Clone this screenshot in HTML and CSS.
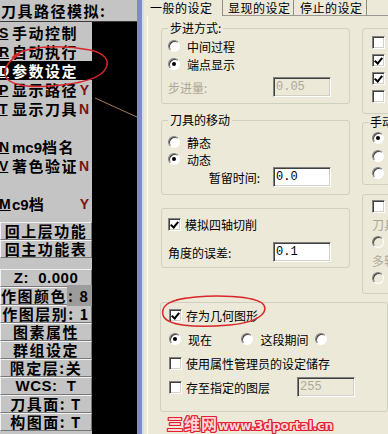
FILE: index.html
```html
<!DOCTYPE html>
<html lang="zh">
<head>
  <meta charset="UTF-8" />
  <title>刀具路径模拟 - 参数设定</title>
  <link rel="stylesheet" href="styles.css">
</head>
<body>
<div class="screen">

  <div class="side">
    <div class="side-title">刀具路径模拟:</div>
    <div class="side-main">
      <div class="menu">
        <div class="item"><span class="key">S</span><span>手动控制</span></div>
        <div class="item"><span class="key">R</span><span>自动执行</span></div>
        <div class="item active"><span class="key">D</span><span>参数设定</span></div>
        <div class="item"><span class="key">P</span><span>显示路径</span><span class="flag">Y</span></div>
        <div class="item"><span class="key">T</span><span>显示刀具</span><span class="flag">N</span></div>
        <div class="item"></div>
        <div class="item"><span class="key">N</span><span><span class="latin">mc9</span>档名</span></div>
        <div class="item"><span class="key">V</span><span>著色验证</span><span class="flag">N</span></div>
        <div class="item"></div>
        <div class="item"><span class="key m">M</span><span><span class="latin">c9</span>档</span><span class="flag">Y</span></div>

        <div class="btn-group">
          <div class="btn">回上层功能</div>
          <div class="btn">回主功能表</div>
        </div>

        <div class="btn-group lower">
          <div class="btn latin">Z:&nbsp; 0.000</div>
          <div class="btn">作图颜色<span class="value">: 8</span></div>
          <div class="btn">作图层别: 1</div>
          <div class="btn">图素属性</div>
          <div class="btn">群组设定</div>
          <div class="btn">限定层:关</div>
          <div class="btn latin">WCS:&nbsp; T</div>
          <div class="btn">刀具面: T</div>
          <div class="btn">构图面: T</div>
        </div>
      </div>
      <div class="canvas">
        <svg width="45" height="412" viewBox="0 0 45 412">
          <line x1="3" y1="76" x2="45" y2="95" stroke="#a87a5a" stroke-width="1" />
        </svg>
      </div>
    </div>
  </div>

  <div class="edge"></div>

  <div class="dialog">
    <div class="tabs">
      <div class="tab active">一般的设定</div>
      <div class="tab second">显现的设定</div>
      <div class="tab third">停止的设定</div>
      <div class="tab-fill"></div>
    </div>

    <div class="page">
      <div class="cols">
        <div class="col-left">
          <fieldset class="group step">
            <legend>步进方式:</legend>
            <div class="row"><span class="radio"></span>中间过程</div>
            <div class="row"><span class="radio on"></span>端点显示</div>
            <div class="row field-row">
              <span class="muted">步进量:</span>
              <span class="field off">0.05</span>
            </div>
          </fieldset>

          <fieldset class="group move">
            <legend>刀具的移动</legend>
            <div class="row"><span class="radio"></span>静态</div>
            <div class="row short"><span class="radio on"></span>动态</div>
            <div class="row field-row end">
              <span class="field-label">暂留时间:</span>
              <span class="field">0.0</span>
            </div>
          </fieldset>

          <fieldset class="group axis">
            <div class="row"><span class="check on"></span>模拟四轴切削</div>
            <div class="row field-row">
              <span>角度的误差:</span>
              <span class="field">0.1</span>
            </div>
          </fieldset>
        </div>

        <div class="col-right">
          <fieldset class="group opts">
            <div class="row"><span class="check"></span></div>
            <div class="row"><span class="check on"></span></div>
            <div class="row"><span class="check on"></span></div>
            <div class="row"><span class="check"></span></div>
          </fieldset>

          <fieldset class="group hand">
            <legend>手动</legend>
            <div class="row"><span class="radio on"></span></div>
            <div class="row"><span class="radio"></span></div>
            <div class="row short"><span class="radio"></span></div>
          </fieldset>

          <fieldset class="group tools">
            <div class="row"><span class="check"></span></div>
            <div class="row muted">刀具</div>
            <div class="row"><span class="radio off"></span></div>
            <div class="row muted">多轴</div>
            <div class="row"><span class="radio off"></span></div>
          </fieldset>
        </div>
      </div>

      <fieldset class="group save">
        <div class="row"><span class="check on"></span>存为几何图形</div>
        <div class="row">
          <span class="choice"><span class="radio on"></span>现在</span>
          <span class="choice wide"><span class="radio"></span>这段期间</span>
          <span class="choice"><span class="radio"></span></span>
        </div>
        <div class="row"><span class="check"></span>使用属性管理员的设定储存</div>
        <div class="row">
          <span class="choice layer"><span class="check"></span>存至指定的图层</span>
          <span class="field off">255</span>
        </div>
      </fieldset>

      <div class="mark"><span class="mark-cn">三维网</span>www.3dportal.cn</div>
    </div>
  </div>

  <svg class="notes" width="388" height="434" viewBox="0 0 388 434">
    <path d="M12 58 C22 46 60 44 90 50 C104 53 110 60 106 68 C101 79 80 84 50 86 C24 88 6 84 5 74 C4 66 10 60 20 54"
          fill="none" stroke="#d8262a" stroke-width="1.5" />
    <path d="M176 300 C205 294 250 295 262 303 C270 310 262 322 230 325 C195 328 166 326 163 315 C161 306 168 301 186 298"
          fill="none" stroke="#d8262a" stroke-width="1.5" />
  </svg>
</div>
</body>
</html>
```

FILE: styles.css
```css
body
{
  margin: 0;
  background: #000;
  overflow: hidden;
}

.screen
{
  position: relative;
  display: flex;
  width: 388px;
  height: 434px;
  overflow: hidden;
}

/* ---- left menu of the CAD program ---- */

.side
{
  width: 137px;
  flex: none;
  display: flex;
  flex-direction: column;
  background: #000;
}

.side-title
{
  height: 21px;
  padding-left: 1px;
  background: #c4c4c4;
  border-bottom: 1px solid #3a3a3a;
  font: bold 15px/21px "Noto Sans CJK SC", sans-serif;
  letter-spacing: 1.5px;
  white-space: nowrap;
}

.side-main
{
  flex: 1;
  display: flex;
}

.menu
{
  width: 92px;
  flex: none;
  padding-top: 1px;
  background: #c4c4c4;
}

.canvas
{
  flex: 1;
  background: #000;
}

.canvas svg
{
  display: block;
}

.item
{
  height: 19px;
  display: flex;
  align-items: center;
  font: bold 15px/19px "Noto Sans CJK SC", sans-serif;
  letter-spacing: 1.5px;
  white-space: nowrap;
  color: #000;
}

.item.active
{
  background: #000;
  color: #fff;
}

.key
{
  width: 12px;
  margin-left: -1px;
  margin-right: 1px;
  font: bold 14px "Liberation Sans", sans-serif;
  letter-spacing: 0;
  text-decoration: underline;
}

.latin
{
  font-family: "Liberation Sans", sans-serif;
  letter-spacing: 0;
}

.flag
{
  margin-left: auto;
  padding-right: 3px;
  font: bold 14px "Liberation Sans", sans-serif;
  letter-spacing: 0;
  color: #7a1414;
}

.btn-group
{
  margin-top: 9px;
}

.btn-group.lower
{
  margin-top: 11px;
}

.btn
{
  height: 16px;
  border: 1px solid;
  border-color: #f2f2f2 #777 #777 #f2f2f2;
  background: #c4c4c4;
  text-align: center;
  font: bold 15px/16px "Noto Sans CJK SC", sans-serif;
  letter-spacing: 1.5px;
  white-space: nowrap;
}

.btn.latin
{
  font: bold 15px/16px "Liberation Sans", sans-serif;
  letter-spacing: 0.5px;
}

.value
{
  background: #9c9c9c;
  padding: 0 2px 0 1px;
}

/* ---- window edge ---- */

.edge
{
  width: 8px;
  flex: none;
  background: linear-gradient(90deg, #7f8cc4 0 5px, #d8dcef 5px 7px, #ece9d8 7px);
}

/* ---- dialog ---- */

.dialog
{
  flex: 1;
  min-width: 0;
  display: flex;
  flex-direction: column;
  padding-left: 2px;
  background: #ece9d8;
  font: 12px "Noto Sans CJK SC", sans-serif;
  color: #000;
}

.tabs
{
  display: flex;
  height: 16px;
  flex: none;
}

.tab
{
  box-sizing: border-box;
  height: 16px;
  line-height: 15px;
  border-right: 1px solid #8d8d86;
  border-bottom: 1px solid #9a9a92;
  white-space: nowrap;
  font-size: 12px;
  letter-spacing: 0.5px;
}

.tab.active
{
  width: 76px;
  padding-left: 3px;
  border-bottom: 0;
}

.tab.second
{
  width: 71px;
  padding-left: 5px;
}

.tab.third
{
  width: 73px;
  padding-left: 6px;
}

.tab-fill
{
  flex: 1;
  border-bottom: 1px solid #9a9a92;
}

.page
{
  flex: 1;
  padding-left: 12px;
  border-left: 1px solid #fdfdfa;
}

.cols
{
  display: flex;
  height: 278px;
}

.col-left
{
  width: 189px;
  margin-left: 1px;
  flex: none;
}

.col-right
{
  width: 70px;
  margin-left: 12px;
  flex: none;
}

.group
{
  box-sizing: border-box;
  margin: 0;
  padding: 0 18px 0 6px;
  min-width: 0;
  border: 1px solid #d0d0bf;
  border-radius: 3px;
}

.group legend
{
  padding: 0 2px;
  line-height: 14px;
}

.step
{
  margin-top: 5px;
  height: 83px;
  padding-top: 2px;
}

.move
{
  margin-top: 9px;
  height: 82px;
  padding-top: 6px;
}

.axis
{
  margin-top: 13px;
  height: 60px;
  padding-top: 6px;
}

.opts
{
  margin-top: 12px;
  height: 86px;
  padding: 4px 0 0 9px;
}

.hand
{
  margin-top: 1px;
  height: 70px;
  padding: 0 0 0 9px;
}

.hand legend
{
  margin-left: -3px;
  padding: 0 1px;
}

.tools
{
  margin-top: 9px;
  height: 100px;
  padding: 2px 0 0 9px;
}

.save
{
  margin-top: 8px;
  height: 110px;
  padding: 0 0 0 8px;
}

.row
{
  height: 18px;
  display: flex;
  align-items: center;
  white-space: nowrap;
}

.row.short
{
  height: 16px;
}

.field-row
{
  height: 20px;
  margin-top: 4px;
  justify-content: space-between;
}

.field-row.end
{
  margin-top: 0;
  justify-content: flex-end;
}

.axis .field-row
{
  margin-top: 9px;
}

.field-label
{
  margin-right: 13px;
}

.save .row
{
  height: 24px;
}

.choice
{
  display: flex;
  align-items: center;
  width: 107px;
}

.choice.wide
{
  width: 108px;
}

.choice.layer
{
  width: 128px;
}

.muted
{
  color: #aca899;
}

/* classic 3d controls */

.radio
{
  position: relative;
  box-sizing: border-box;
  width: 12px;
  height: 12px;
  margin-right: 7px;
  flex: none;
  border-radius: 50%;
  border: 1px solid;
  border-color: #808080 #fff #fff #808080;
  box-shadow: inset 1px 1px 0 #404040;
  background: #fff;
}

.radio.on::after
{
  content: "";
  position: absolute;
  left: 3px;
  top: 3px;
  width: 4px;
  height: 4px;
  border-radius: 50%;
  background: #000;
}

.radio.off
{
  background: #ece9d8;
}

.check
{
  position: relative;
  box-sizing: border-box;
  width: 13px;
  height: 13px;
  margin-right: 4px;
  flex: none;
  border: 1px solid;
  border-color: #808080 #fff #fff #808080;
  box-shadow: inset 1px 1px 0 #404040, inset -1px -1px 0 #d4d0c8;
  background: #fff;
}

.check.on::after
{
  content: "";
  position: absolute;
  left: 3px;
  top: 1px;
  width: 3px;
  height: 6px;
  border-right: 2px solid #000;
  border-bottom: 2px solid #000;
  transform: rotate(40deg);
}

.field
{
  box-sizing: border-box;
  width: 58px;
  height: 20px;
  padding-left: 2px;
  border: 1px solid;
  border-color: #808080 #fff #fff #808080;
  box-shadow: inset 1px 1px 0 #404040, inset -1px -1px 0 #d4d0c8;
  background: #fff;
  font: 12px/18px "Liberation Mono", monospace;
}

.field.off
{
  background: #ece9d8;
  color: #aca899;
}

.mark
{
  margin-top: 3px;
  padding-left: 7px;
  font: bold 12px/17px "DejaVu Sans", sans-serif;
  color: #ffd4d8;
  white-space: nowrap;
  text-shadow: 1px 0 #e0202e, -1px 0 #e0202e, 0 1px #e0202e, 0 -1px #e0202e,
               1px 1px #e0202e, -1px -1px #e0202e, 1px -1px #e0202e, -1px 1px #e0202e;
}

.mark-cn
{
  font: bold 16px/17px "Noto Sans CJK SC", sans-serif;
  letter-spacing: 1px;
}

/* hand-drawn marks over the screenshot */

.notes
{
  position: absolute;
  left: 0;
  top: 0;
  pointer-events: none;
}
```
